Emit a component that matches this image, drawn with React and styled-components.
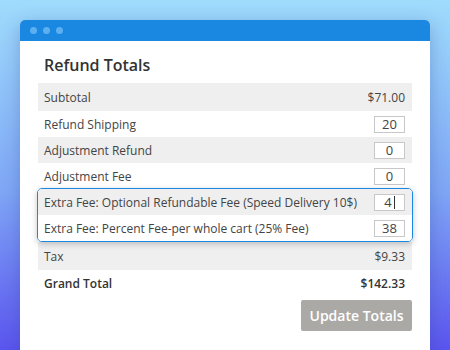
import styled, { createGlobalStyle } from "styled-components";

const GlobalStyle = createGlobalStyle`
  html, body {
    margin: 0;
    padding: 0;
  }
  body {
    font-family: "Open Sans", "Liberation Sans", sans-serif;
    color: #444;
  }
`;

const rows = [
  { label: "Subtotal", value: "$71.00", shade: true, tall: true },
  { label: "Refund Shipping", input: "20" },
  { label: "Adjustment Refund", input: "0", shade: true },
  { label: "Adjustment Fee", input: "0" },
];

const extraFees = [
  { label: "Extra Fee: Optional Refundable Fee (Speed Delivery 10$)", input: "4", shade: true, focused: true },
  { label: "Extra Fee: Percent Fee-per whole cart (25% Fee)", input: "38" },
];

const Row = ({ label, value, input, shade, tall, bold, focused }) => (
  <RowBox $shade={shade} $tall={tall} $bold={bold}>
    <span>{label}</span>
    {input !== undefined ? (
      <Field>
        {input}
        {focused && <Caret />}
      </Field>
    ) : (
      <Value>{value}</Value>
    )}
  </RowBox>
);

export default function App() {
  return (
    <>
      <GlobalStyle />
      <Page>
        <Window>
          <TitleBar>
            <Dot />
            <Dot />
            <Dot />
          </TitleBar>
          <Body>
            <Title>Refund Totals</Title>
            <Table>
              {rows.map((r) => (
                <Row key={r.label} {...r} />
              ))}
              <Highlight>
                {extraFees.map((r) => (
                  <Row key={r.label} {...r} />
                ))}
              </Highlight>
              <Row label="Tax" value="$9.33" shade tall />
              <Row label="Grand Total" value="$142.33" bold />
            </Table>
            <Actions>
              <Button>Update Totals</Button>
            </Actions>
          </Body>
        </Window>
      </Page>
    </>
  );
}

const Page = styled.div`
  width: 450px;
  height: 350px;
  overflow: hidden;
  box-sizing: border-box;
  padding: 20px 20px 0;
  background: linear-gradient(180deg, #9fdcfc 0%, #7fa6f6 55%, #5b55ef 100%);
`;

const Window = styled.div`
  height: 360px;
  background: #fff;
  border-radius: 5px 5px 0 0;
  box-shadow: 0 4px 18px rgba(40, 60, 140, 0.3);
  overflow: hidden;
`;

const TitleBar = styled.div`
  height: 21px;
  background: #1a87e0;
  display: flex;
  align-items: center;
  gap: 6px;
  padding: 0 10px;
`;

const Dot = styled.span`
  width: 7px;
  height: 7px;
  border-radius: 50%;
  background: #5cb0f2;
`;

const Body = styled.div`
  padding: 13px 18px 0;
`;

const Title = styled.h2`
  margin: 0 0 6px;
  padding-left: 6px;
  font-size: 16px;
  line-height: 23px;
  font-weight: 600;
  color: #333;
`;

const Table = styled.div`
  display: flex;
  flex-direction: column;
`;

const RowBox = styled.div`
  display: flex;
  align-items: center;
  justify-content: space-between;
  height: ${({ $tall }) => ($tall ? "28px" : "26px")};
  padding: 0 7px 0 6px;
  background: ${({ $shade }) => ($shade ? "#efefef" : "#fff")};
  font-size: 12px;
  font-weight: ${({ $bold }) => ($bold ? 600 : 400)};
  color: ${({ $bold }) => ($bold ? "#333" : "#444")};
  white-space: nowrap;
`;

const Value = styled.span``;

const Field = styled.span`
  box-sizing: border-box;
  width: 31px;
  height: 17px;
  border: 1px solid #c8c8c8;
  background: #fff;
  display: flex;
  align-items: center;
  justify-content: center;
  font-size: 13px;
  line-height: 15px;
  color: #444;
`;

const Caret = styled.i`
  display: inline-block;
  width: 1px;
  height: 13px;
  margin-left: 2px;
  background: #333;
`;

const Highlight = styled.div`
  margin: -1px -1px 0;
  border: 1px solid #1a87e0;
  border-radius: 5px;
  overflow: hidden;
  box-shadow: 0 2px 6px rgba(0, 0, 0, 0.22);
  position: relative;
  z-index: 1;
`;

const Actions = styled.div`
  display: flex;
  justify-content: flex-end;
  margin-top: 4px;
`;

const Button = styled.button`
  width: 111px;
  height: 31px;
  border: none;
  border-radius: 2px;
  background: #aba9a6;
  color: #fff;
  font-family: "Open Sans", "Liberation Sans", sans-serif;
  font-size: 14px;
  font-weight: 600;
  padding: 0;
`;
